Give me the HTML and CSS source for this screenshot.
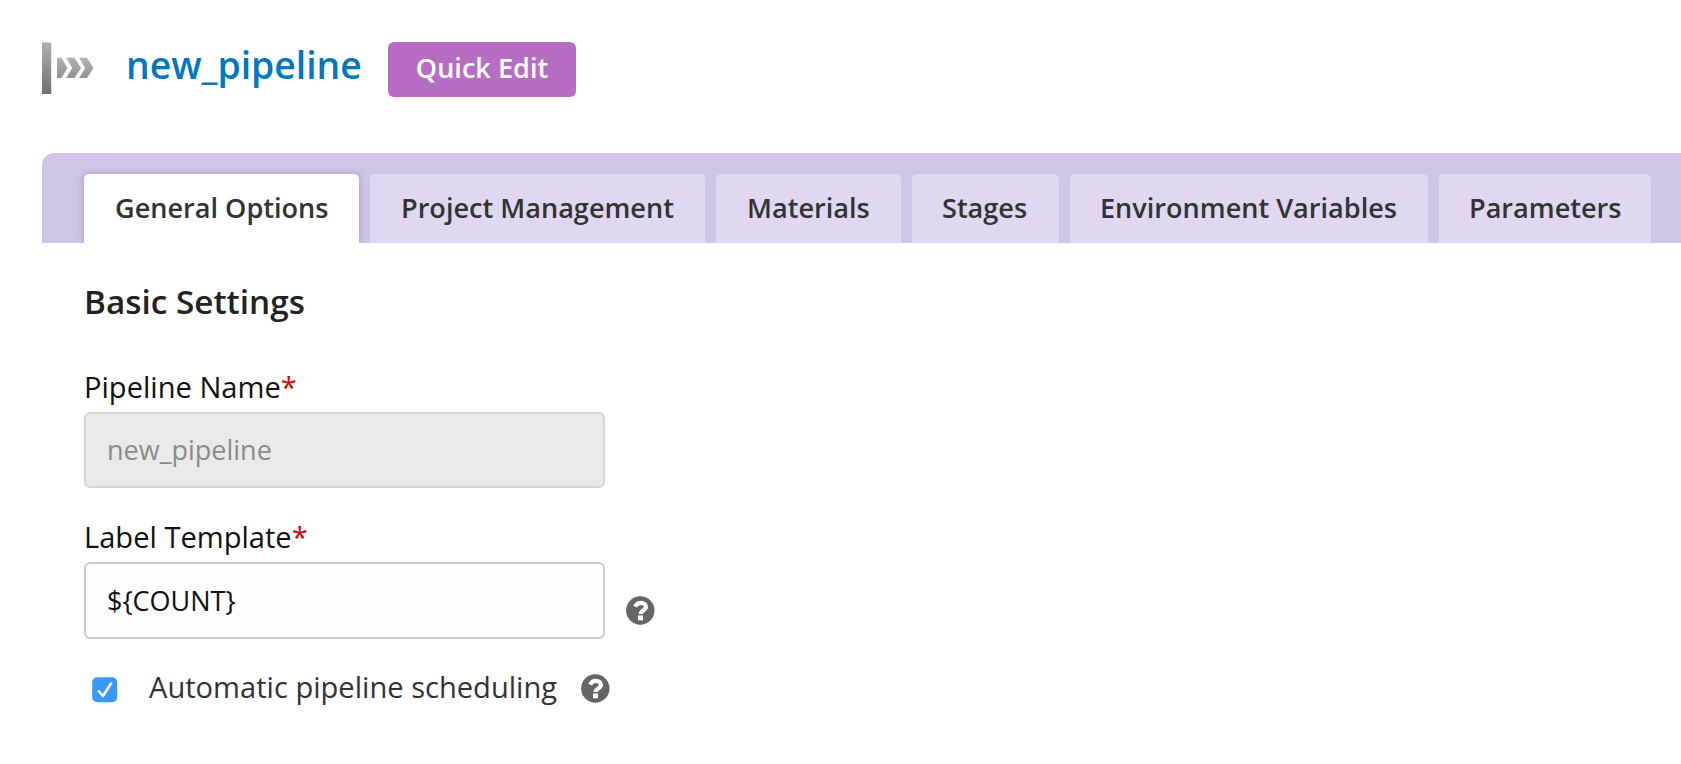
FILE: index.html
```html
<!DOCTYPE html>
<html lang="en">
<head>
<meta charset="utf-8">
<title>new_pipeline</title>
<link rel="stylesheet" href="styles.css">
</head>
<body>
<svg class="defs" width="0" height="0">
  <symbol id="help" viewBox="0 0 29 29">
    <circle cx="14.3" cy="14.5" r="14.2" fill="#666"/>
    <path d="M9.100 10.700C10.300 8 12.100 6.800 14.700 6.800c3 0 5.200 1.600 5.200 4.200 0 3.600-5.200 3.400-5.200 7" fill="none" stroke="#fff" stroke-width="4.200"/>
    <rect x="12" y="19.400" width="5" height="4.900" fill="#fff"/>
  </symbol>
</svg>
<header class="header">
  <svg class="logo" width="54" height="54" viewBox="0 0 54 54">
    <defs>
      <linearGradient id="bar" x1="0" y1="0" x2="0" y2="1"><stop offset="0" stop-color="#b0b0b0"/><stop offset="1" stop-color="#707070"/></linearGradient>
      <linearGradient id="arrow" x1="0" y1="0" x2="0" y2="1"><stop offset="0" stop-color="#b2b2b2"/><stop offset="1" stop-color="#929292"/></linearGradient>
    </defs>
    <g class="logo-shape">
      <rect x="0" y="0.500" width="9.200" height="51.500" fill="url(#bar)"/>
      <path d="M15 15.800H19.500L25.500 25.900L19.500 36H15Z" fill="url(#arrow)"/>
      <path d="M24.200 15.800H32.500L39 25.900L32.500 36H24.200L30.200 25.900Z" fill="url(#arrow)"/>
      <path d="M37.200 15.800H45L51.500 25.900L45 36H37.200L43.200 25.900Z" fill="url(#arrow)"/>
    </g>
  </svg>
  <a class="title">new_pipeline</a>
  <button class="quick-edit">Quick Edit</button>
</header>
<nav class="tabs">
  <a class="tab tab-active general">General Options</a>
  <a class="tab project">Project Management</a>
  <a class="tab materials">Materials</a>
  <a class="tab stages">Stages</a>
  <a class="tab environment">Environment Variables</a>
  <a class="tab parameters">Parameters</a>
</nav>
<main class="panel">
  <h2 class="heading">Basic Settings</h2>
  <div class="field">
    <div class="label"><span class="label-name">Pipeline Name</span><span class="required">*</span></div>
    <div class="input input-disabled">new_pipeline</div>
  </div>
  <div class="field">
    <div class="label"><span class="label-name">Label Template</span><span class="required">*</span></div>
    <div class="input-row">
      <div class="input">${COUNT}</div>
      <svg class="help" width="29" height="29"><use href="#help"/></svg>
    </div>
  </div>
  <div class="check-row">
    <svg class="checkbox" width="26" height="26" viewBox="0 0 26 26"><rect x="0.200" y="0.200" width="25" height="25" rx="5" fill="#3b99fc"/><path d="M6.800 14.200L11 19L19 6.500" fill="none" stroke="#fff" stroke-width="2.500" stroke-linecap="round" stroke-linejoin="round"/></svg>
    <span class="check-label">Automatic pipeline scheduling</span>
    <svg class="help-inline" width="29" height="29"><use href="#help"/></svg>
  </div>
</main>
</body>
</html>
```
FILE: styles.css
```css
* { box-sizing: border-box; }
body {
  margin: 0;
  height: 764px;
  overflow: hidden;
  background: #fff;
  font-family: "Open Sans", "Noto Sans", sans-serif;
}
.defs { display: block; height: 0; }
.header {
  display: flex;
  align-items: flex-start;
  height: 153px;
  padding: 42px 0 0 42px;
}
.logo-shape { filter: blur(0.6px); }
.title {
  width: 236px;
  margin-left: 30px;
  font-size: 37.3px;
  font-weight: 600;
  line-height: 46px;
  color: #0077c2;
  white-space: nowrap;
}
.quick-edit {
  width: 188px;
  height: 55px;
  margin-left: 26px;
  padding: 0 0 5px;
  border: 0;
  border-radius: 6px;
  background: #b66dc2;
  font-family: inherit;
  font-size: 27.1px;
  font-weight: 600;
  color: #fff;
  white-space: nowrap;
}
.tabs {
  display: flex;
  gap: 11px;
  height: 90px;
  margin-left: 42px;
  padding: 21px 0 0 42px;
  border-top-left-radius: 12px;
  background: #d0c4e8;
}
.tab {
  flex: none;
  height: 69px;
  padding-left: 31px;
  border-radius: 5px 5px 0 0;
  background: #e0d8f0;
  font-size: 27.1px;
  font-weight: 600;
  line-height: 67px;
  color: #333;
  white-space: nowrap;
}
.tab-active {
  background: #fff;
  box-shadow: 0 0 7px rgba(80, 60, 120, 0.35);
  clip-path: inset(-10px -10px 0 -10px);
}
.general { width: 275px; }
.project { width: 335px; }
.materials { width: 185px; }
.stages { width: 147px; padding-left: 30px; }
.environment { width: 358px; padding-left: 30px; }
.parameters { width: 212px; padding-left: 30px; }
.panel { padding: 35px 0 0 84px; }
.heading {
  margin: 0 0 40px;
  font-size: 33.3px;
  font-weight: 600;
  line-height: 46px;
  color: #222;
}
.field { height: 150px; }
.label {
  height: 48px;
  font-size: 29.1px;
  line-height: 47px;
  color: #111;
  white-space: nowrap;
}
.required { color: #d80000; }
.input-row { display: flex; gap: 21px; }
.input {
  width: 521px;
  height: 77px;
  padding-left: 21px;
  border: 2px solid #ccc;
  border-radius: 6px;
  background: #fefefe;
  font-size: 27px;
  line-height: 73px;
  color: #111;
}
.input-disabled {
  height: 76px;
  border-color: #d6d6d6;
  background: #eaeaea;
  line-height: 72px;
  color: #8b8b8b;
}
.help { margin-top: 34px; }
.check-row {
  display: flex;
  padding-left: 8px;
  height: 50px;
}
.checkbox { margin-top: 13px; }
.check-label {
  width: 411px;
  margin-left: 31px;
  font-size: 29.1px;
  line-height: 47px;
  color: #333;
  white-space: nowrap;
}
.help-inline { margin: 10px 0 0 21px; }
```
